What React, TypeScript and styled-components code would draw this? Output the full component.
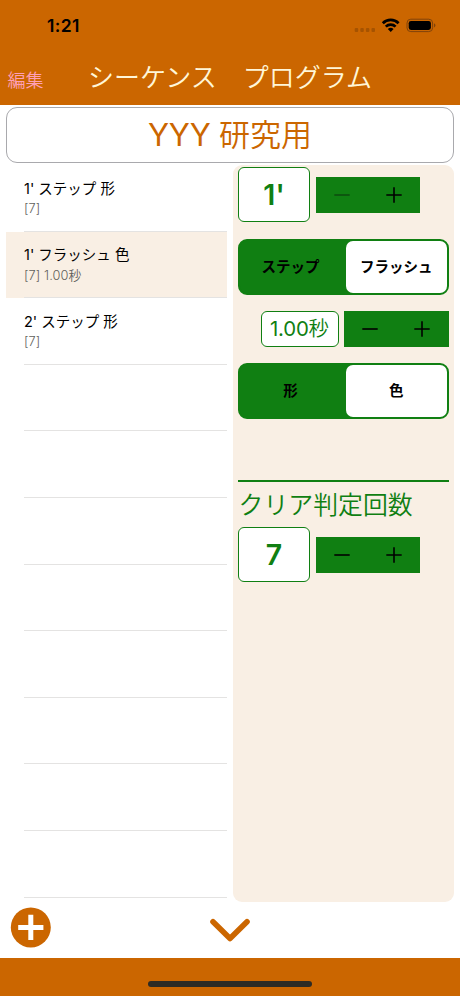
import React from "react";
import styled, { createGlobalStyle } from "styled-components";

const ORANGE = "#cb6600";
const GREEN = "#107f12";
const CREAM = "#f9efe4";

const GlobalStyle = createGlobalStyle`
  *, *::before, *::after { box-sizing: border-box; }
  body { margin: 0; background: #fff; }
  button { font: inherit; border: 0; padding: 0; background: none; color: inherit; }
`;

const Screen = styled.div`
  width: 460px;
  height: 996px;
  display: flex;
  flex-direction: column;
  background: #fff;
  overflow: hidden;
  font-family: Inter, "Noto Sans CJK JP", sans-serif;
  color: #000;
  white-space: nowrap;
`;

const Header = styled.header`
  height: 104.5px;
  flex: none;
  background: ${ORANGE};
`;

const StatusBar = styled.div`
  height: 50px;
  display: flex;
  align-items: center;
  padding: 0 24px 0 47px;
  justify-content: space-between;
`;

const Clock = styled.span`
  font-size: 17.5px;
  font-weight: 600;
  line-height: 20px;
  letter-spacing: 0.4px;
  margin-top: 1px;
`;

const NavBar = styled.div`
  height: 54px;
  display: grid;
  grid-template-columns: 80px 1fr 80px;
  align-items: center;
`;

const EditButton = styled.button`
  margin: 7px 0 0 7.5px;
  justify-self: start;
  font-size: 18px;
  line-height: 26px;
  font-weight: 350;
  color: #ff9fb8;
`;

const Title = styled.h1`
  margin: 0;
  padding-top: 1px;
  text-align: center;
  font-size: 26px;
  line-height: 38px;
  font-weight: 350;
  color: #fff6d8;
`;

const NameField = styled.div`
  flex: none;
  height: 55.5px;
  margin: 2.5px 6px 0;
  border: 1px solid #a9a9ad;
  border-radius: 11px;
  display: flex;
  align-items: center;
  justify-content: center;
  font-size: 31px;
  line-height: 44px;
  font-weight: 350;
  white-space: pre;
  color: ${ORANGE};
`;

const Latin = styled.span`
  font-weight: 400;
  letter-spacing: -0.2px;
`;

const Body = styled.main`
  height: 737px;
  margin: 2.5px 6px 0;
  display: grid;
  grid-template-columns: 221px 221px;
  justify-content: space-between;
`;

const List = styled.ul`
  margin: 0;
  padding: 0;
  list-style: none;
`;

const Row = styled.li<{ $selected?: boolean }>`
  height: 66.6px;
  padding-left: 18px;
  background: ${(p) => (p.$selected ? CREAM : "transparent")};
`;

const RowInner = styled.div`
  height: 100%;
  border-bottom: 1px solid #e4e3e2;
  padding-top: 12.5px;
`;

const RowTitle = styled.div`
  font-size: 14.5px;
  line-height: 22px;
`;

const RowDetail = styled.div`
  font-size: 12.8px;
  font-weight: 350;
  line-height: 18px;
  padding-top: 0.5px;
  letter-spacing: 0.1px;
  color: #625f5c;
`;

const Panel = styled.section`
  background: ${CREAM};
  border-radius: 9px;
  padding: 2px 5px 0 5px;
  display: flex;
  flex-direction: column;
`;

const Controls = styled.div<{ $end?: boolean; $height: number }>`
  height: ${(p) => p.$height}px;
  display: flex;
  align-items: center;
  gap: 5.5px;
  justify-content: ${(p) => (p.$end ? "flex-end" : "flex-start")};
  padding-right: ${(p) => (p.$end ? 0.5 : 0)}px;
`;

const ValueBox = styled.div<{ $small?: boolean }>`
  width: ${(p) => (p.$small ? 78 : 72)}px;
  height: ${(p) => (p.$small ? 36 : 55)}px;
  border: 1px solid ${GREEN};
  border-radius: 6px;
  background: #fff;
  color: ${GREEN};
  display: flex;
  align-items: center;
  justify-content: center;
  font-size: ${(p) => (p.$small ? 20.4 : 28.5)}px;
  font-weight: ${(p) => (p.$small ? 350 : 600)};
  line-height: 34px;
`;

const StepperBox = styled.div`
  width: 104.5px;
  height: 35.5px;
  background: ${GREEN};
  display: grid;
  grid-template-columns: 1fr 1fr;
`;

const StepButton = styled.button<{ $dim?: boolean }>`
  display: grid;
  place-items: center;
  color: ${(p) => (p.$dim ? "#0d4e10" : "#000")};
`;

const Segments = styled.div`
  height: 55.5px;
  border: 2px solid ${GREEN};
  border-radius: 9px;
  background: ${GREEN};
  display: grid;
  grid-template-columns: 101px 1fr;
  column-gap: 4.5px;
`;

const Segment = styled.button<{ $active?: boolean }>`
  border-radius: 7px;
  background: ${(p) => (p.$active ? "#fff" : "transparent")};
  padding-top: 1px;
  font-size: 14.5px;
  line-height: 22px;
  font-weight: 700;
  display: flex;
  align-items: center;
  justify-content: center;
`;

const Gap = styled.div<{ $size: number }>`
  height: ${(p) => p.$size}px;
  flex: none;
`;

const Rule = styled.hr`
  margin: 0;
  border: 0;
  height: 2px;
  background: ${GREEN};
`;

const CountLabel = styled.h2`
  margin: 0;
  padding: 4px 0 0 0.5px;
  height: 45px;
  font-size: 24.9px;
  line-height: 38px;
  font-weight: 350;
  color: ${GREEN};
`;

const Toolbar = styled.div`
  height: 56px;
  flex: none;
  display: grid;
  grid-template-columns: 1fr auto 1fr;
  align-items: start;
  padding: 5px 10px 0;
`;

const IconButton = styled.button<{ $offset?: number }>`
  display: flex;
  justify-self: start;
  padding-top: ${(p) => p.$offset ?? 0}px;
`;

const Footer = styled.footer`
  flex: 1;
  background: ${ORANGE};
  display: flex;
  justify-content: center;
  align-items: flex-start;
  padding-top: 23px;
`;

const HomeIndicator = styled.div`
  width: 164px;
  height: 6px;
  border-radius: 3px;
  background: #2d2b24;
`;

function StatusIcons() {
  return (
    <svg width="84" height="20" viewBox="352 15 84 20">
      <g fill="#a65300">
        <rect x="354.7" y="28" width="3.5" height="4" rx="1" />
        <rect x="360.3" y="28" width="3.5" height="4" rx="1" />
        <rect x="365.9" y="28" width="3.5" height="4" rx="1" />
        <rect x="371.5" y="28" width="3.5" height="4" rx="1" />
      </g>
      <g fill="none" stroke="#000" strokeWidth="2.7">
        <path d="M382.8 23.2a11.2 11.2 0 0 1 15.8 0" />
        <path d="M385.8 26.6a6.9 6.9 0 0 1 9.8 0" />
      </g>
      <path d="M390.7 32l-2.9-2.9a4.1 4.1 0 0 1 5.8 0z" fill="#000" />
      <rect x="407" y="19.2" width="25.6" height="12.4" rx="3.8" fill="none" stroke="#80430a" />
      <rect x="408.7" y="20.9" width="22.2" height="9" rx="2.3" />
      <path d="M434 23.3c2 .8 2 3.4 0 4.2z" fill="#80430a" />
    </svg>
  );
}

function Stepper({ atMinimum }: { atMinimum?: boolean }) {
  return (
    <StepperBox>
      <StepButton $dim={atMinimum} aria-label="減らす">
        <svg width="16" height="16" viewBox="0 0 16 16">
          <path d="M.3 8h15.4" stroke="currentColor" strokeWidth="1.6" />
        </svg>
      </StepButton>
      <StepButton aria-label="増やす">
        <svg width="16" height="16" viewBox="0 0 16 16">
          <path d="M.3 8h15.4M8 .3v15.4" stroke="currentColor" strokeWidth="1.6" />
        </svg>
      </StepButton>
    </StepperBox>
  );
}

function SegmentedControl({ options, selected }: { options: string[]; selected: number }) {
  return (
    <Segments>
      {options.map((option, i) => (
        <Segment key={option} $active={i === selected}>
          {option}
        </Segment>
      ))}
    </Segments>
  );
}

const steps = [
  { title: "1' ステップ 形", detail: "[7]" },
  { title: "1' フラッシュ 色", detail: "[7] 1.00秒", selected: true },
  { title: "2' ステップ 形", detail: "[7]" },
];

const emptyRows = Array.from({ length: 8 }, (_, i) => i);

export default function App() {
  return (
    <Screen>
      <GlobalStyle />
      <Header>
        <StatusBar>
          <Clock>1:21</Clock>
          <StatusIcons />
        </StatusBar>
        <NavBar>
          <EditButton>編集</EditButton>
          <Title>シーケンス　プログラム</Title>
        </NavBar>
      </Header>
      <NameField>
        <Latin>YYY </Latin>研究用
      </NameField>
      <Body>
        <List>
          {steps.map((step) => (
            <Row key={step.title} $selected={step.selected}>
              <RowInner>
                <RowTitle>{step.title}</RowTitle>
                <RowDetail>{step.detail}</RowDetail>
              </RowInner>
            </Row>
          ))}
          {emptyRows.map((i) => (
            <Row key={i}>
              <RowInner />
            </Row>
          ))}
        </List>
        <Panel>
          <Controls $height={55.5}>
            <ValueBox>1'</ValueBox>
            <Stepper atMinimum />
          </Controls>
          <Gap $size={16.5} />
          <SegmentedControl options={["ステップ", "フラッシュ"]} selected={1} />
          <Gap $size={16.5} />
          <Controls $end $height={36}>
            <ValueBox $small>
              <Latin>1.00</Latin>秒
            </ValueBox>
            <Stepper />
          </Controls>
          <Gap $size={16} />
          <SegmentedControl options={["形", "色"]} selected={1} />
          <Gap $size={61.5} />
          <Rule />
          <CountLabel>クリア判定回数</CountLabel>
          <Controls $height={55.5}>
            <ValueBox>7</ValueBox>
            <Stepper />
          </Controls>
        </Panel>
      </Body>
      <Toolbar>
        <IconButton aria-label="追加">
          <svg width="42" height="42" viewBox="0 0 42 42">
            <circle cx="20.8" cy="20.4" r="20" fill={ORANGE} />
            <path d="M8.2 20.4h25.2M20.8 7.8V33" stroke="#fff" strokeWidth="5" />
          </svg>
        </IconButton>
        <IconButton $offset={11} aria-label="閉じる">
          <svg width="40" height="25" viewBox="0 0 40 25">
            <path
              d="M3 3.7L20 20.6L37 3.7"
              fill="none"
              stroke={ORANGE}
              strokeWidth="5.6"
              strokeLinecap="round"
              strokeLinejoin="round"
            />
          </svg>
        </IconButton>
      </Toolbar>
      <Footer>
        <HomeIndicator />
      </Footer>
    </Screen>
  );
}
